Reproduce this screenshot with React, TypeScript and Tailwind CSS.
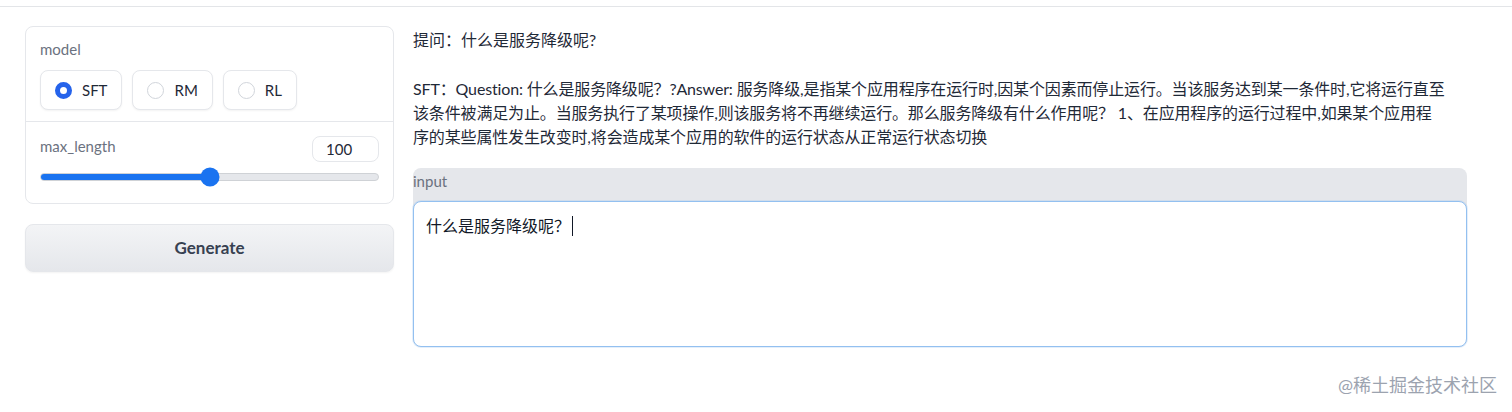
import { useState } from "react";

const font = { fontFamily: 'Lato, "Noto Sans CJK SC", sans-serif' };

const models = ["SFT", "RM", "RL"];

export default function App() {
  const [model, setModel] = useState("SFT");
  const [len, setLen] = useState(100);

  return (
    <div className="relative h-[412px] w-[1512px] overflow-hidden bg-white text-[#1f2937]" style={font}>
      <div className="h-[7px] border-b border-[#e3e5e8]" />

      <div className="flex gap-[19px] pl-[25px] pt-[19px]">
        {/* left column */}
        <div className="flex w-[369px] shrink-0 flex-col gap-[20px]">
          <div className="rounded-lg border border-[#e5e7eb] bg-white">
            <div className="px-[14px] pb-[11px] pt-[12px]">
              <p className="text-[15px] leading-[20px] text-[#6b7280]">model</p>
              <div className="mt-[11px] flex gap-[10px]">
                {models.map((m) => (
                  <label
                    key={m}
                    onClick={() => setModel(m)}
                    className="flex h-[40px] cursor-pointer items-center gap-[10px] rounded-lg border border-[#e5e7eb] bg-white pl-[14px] pr-[14px] text-[15px] text-[#1f2937] shadow-[0_1px_2px_rgba(0,0,0,0.05)]"
                  >
                    {model === m ? (
                      <span className="h-[17px] w-[17px] rounded-full border-[5px] border-[#2563eb] bg-white" />
                    ) : (
                      <span className="h-[17px] w-[17px] rounded-full border border-[#d1d5db] bg-white" />
                    )}
                    {m}
                  </label>
                ))}
              </div>
            </div>
            <div className="border-t border-[#e5e7eb] px-[14px] pb-[22px] pt-[14px]">
              <div className="flex items-start justify-between">
                <p className="text-[15px] leading-[20px] text-[#6b7280]">max_length</p>
                <div className="flex h-[26px] w-[67px] items-center rounded-lg border border-[#e5e7eb] bg-white pl-[13px] text-[15px] text-[#1f2937]">
                  {len}
                </div>
              </div>
              <div className="relative mt-[11px] h-[8px] rounded-full border border-[#cfd2d6] bg-[#e5e7eb]">
                <div className="h-full rounded-full bg-[#1a73f0]" style={{ width: `${len / 2}%` }} />
                <div
                  className="absolute top-1/2 h-[19px] w-[19px] -translate-x-1/2 -translate-y-1/2 rounded-full bg-[#1a73f0]"
                  style={{ left: `${len / 2}%` }}
                  onClick={() => setLen(len)}
                />
              </div>
            </div>
          </div>

          <button className="h-[48px] w-full rounded-lg border border-[#e5e7eb] bg-gradient-to-b from-[#f3f4f6] to-[#e5e7eb] text-[17px] font-bold text-[#374151] shadow-[0_1px_2px_rgba(0,0,0,0.05)]">
            Generate
          </button>
        </div>

        {/* right column */}
        <div className="w-[1054px] shrink-0 pt-[2px]">
          <p className="text-[16px] leading-[24px] text-[#1f2937]">提问：什么是服务降级呢?</p>
          <p className="mt-[25px] whitespace-nowrap text-[16px] leading-[24px] tracking-[-0.15px] text-[#1f2937]">
            SFT：Question: 什么是服务降级呢？?Answer: 服务降级,是指某个应用程序在运行时,因某个因素而停止运行。当该服务达到某一条件时,它将运行直至
            <br />
            该条件被满足为止。当服务执行了某项操作,则该服务将不再继续运行。那么服务降级有什么作用呢？ 1、在应用程序的运行过程中,如果某个应用程
            <br />
            序的某些属性发生改变时,将会造成某个应用的软件的运行状态从正常运行状态切换
          </p>

          <div className="mt-[19px] rounded-lg bg-[#e5e7eb]">
            <p className="h-[33px] pt-[3px] text-[15px] leading-[20px] text-[#6b7280]">input</p>
            <div className="h-[146px] rounded-lg border border-[#93c0f0] bg-white px-[12px] py-[10px] shadow-[0_0_0_1px_rgba(147,192,240,0.25)]">
              <span className="text-[16px] leading-[24px] text-[#111827]">什么是服务降级呢？</span>
              <span className="ml-[2px] inline-block h-[20px] w-px translate-y-[4px] bg-[#111827]" />
            </div>
          </div>
        </div>
      </div>

      <div className="absolute left-[1338px] top-[373px] text-[18px] leading-[24px] text-[#9ca3af]">
        @稀土掘金技术社区
      </div>
    </div>
  );
}
